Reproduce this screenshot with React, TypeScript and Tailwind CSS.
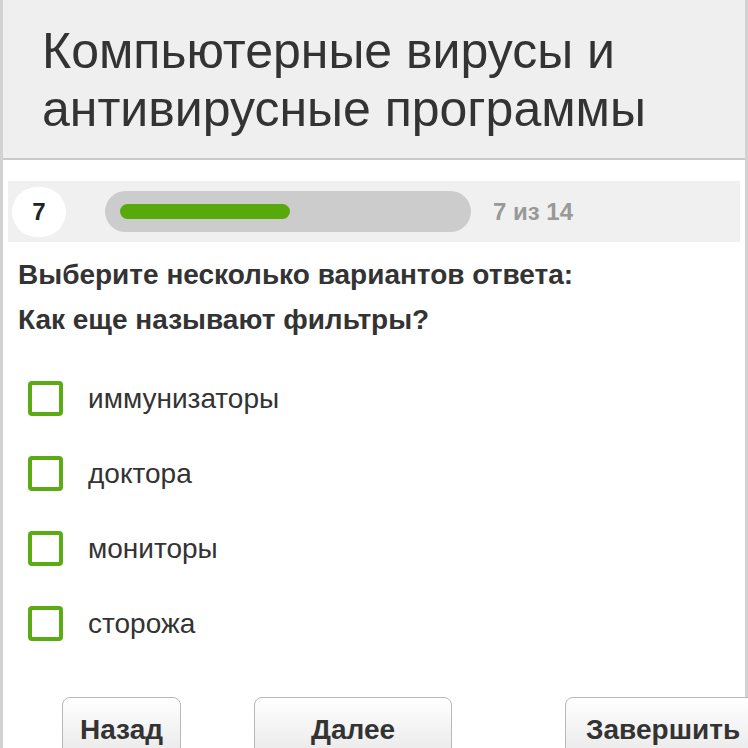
import React from "react";

const options = ["иммунизаторы", "доктора", "мониторы", "сторожа"];

export default function App() {
  return (
    <div className="w-[748px] h-[748px] overflow-hidden bg-white font-['Liberation_Sans',Arial,sans-serif] text-[#333]">
      <div className="h-[748px] border-l-[3px] border-r-[3px] border-[#d2d2d2]">
        <div className="bg-[#efefef] border-b-2 border-[#c9c9c9] pl-[39px] pt-[22px] pb-[20px] h-[160px]">
          <h1 className="text-[50px] leading-[58px] font-normal text-[#333] m-0">
            Компьютерные вирусы и
            <br />
            антивирусные программы
          </h1>
        </div>

        <div className="mx-[5px] mt-[21px] h-[61px] bg-[#f0f0f0] flex items-center pl-[4px]">
          <div className="w-[54px] h-[50px] rounded-full bg-white flex items-center justify-center text-[24px] font-bold text-[#222]">
            7
          </div>
          <div className="ml-[39px] w-[366px] h-[41px] rounded-full bg-[#cccccc] flex items-center pl-[15px]">
            <div className="w-[170px] h-[15px] rounded-full bg-[#58aa0c]" />
          </div>
          <div className="ml-[22px] text-[24px] font-bold text-[#999]">7 из 14</div>
        </div>

        <div className="pl-[15px] pt-[10px] font-bold text-[28px] leading-[45px] text-[#333]">
          <div>Выберите несколько вариантов ответа:</div>
          <div>Как еще называют фильтры?</div>
        </div>

        <div className="mt-[39px] flex flex-col gap-[40px]">
          {options.map((o) => (
            <label key={o} className="flex items-center h-[35px]">
              <span className="ml-[25px] w-[35px] h-[35px] rounded-[4px] border-[4px] border-[#5aab14] bg-white shrink-0" />
              <span className="ml-[25px] text-[28px] text-[#333]">{o}</span>
            </label>
          ))}
        </div>

        <div className="mt-[56px] flex items-start relative">
          <button className="shrink-0 ml-[59px] w-[119px] h-[60px] rounded-[8px] border-[1.5px] border-[#b8b8b8] bg-gradient-to-b from-white to-[#e9e9e9] text-[28px] font-bold text-[#333] pt-[6px]">
            Назад
          </button>
          <button className="shrink-0 ml-[73px] w-[198px] h-[60px] rounded-[8px] border-[1.5px] border-[#b8b8b8] bg-gradient-to-b from-white to-[#e9e9e9] text-[28px] font-bold text-[#333] pt-[6px]">
            Далее
          </button>
          <button className="shrink-0 ml-[113px] w-[200px] h-[60px] rounded-[8px] border-[1.5px] border-[#b8b8b8] bg-gradient-to-b from-white to-[#e9e9e9] text-[28px] font-bold text-[#333] pt-[6px] text-left pl-[20px]">
            Завершить
          </button>
        </div>
      </div>
    </div>
  );
}
